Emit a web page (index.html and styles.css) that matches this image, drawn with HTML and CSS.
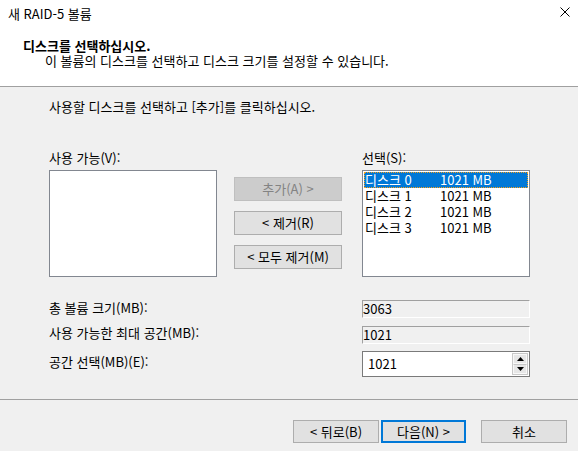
FILE: index.html
```html
<!DOCTYPE html>
<html lang="ko">
<head>
<meta charset="utf-8">
<title>새 RAID-5 볼륨</title>
<link rel="stylesheet" href="styles.css">
</head>
<body>
<div class="dialog">
  <div class="header">
    <div class="titlebar">
      <span class="title">새 RAID-5 볼륨</span>
      <svg class="close" width="10" height="10" viewBox="0 0 10 10"><path d="M0.5 0.5 L9.5 9.5 M9.5 0.5 L0.5 9.5" stroke="#000" stroke-width="1" fill="none"/></svg>
    </div>
    <div class="heading">디스크를 선택하십시오.</div>
    <div class="subheading">이 볼륨의 디스크를 선택하고 디스크 크기를 설정할 수 있습니다.</div>
  </div>

  <div class="content">
    <div class="instruction">사용할 디스크를 선택하고 [추가]를 클릭하십시오.</div>

    <div class="picker">
      <div class="col">
        <div class="label">사용 가능(V):</div>
        <div class="listbox"></div>
      </div>
      <div class="buttons">
        <div class="btn disabled">추가(A) &gt;</div>
        <div class="btn">&lt; 제거(R)</div>
        <div class="btn">&lt; 모두 제거(M)</div>
      </div>
      <div class="col">
        <div class="label">선택(S):</div>
        <div class="listbox">
          <div class="row selected"><span class="c1">디스크 0</span><span>1021 MB</span></div>
          <div class="row"><span class="c1">디스크 1</span><span>1021 MB</span></div>
          <div class="row"><span class="c1">디스크 2</span><span>1021 MB</span></div>
          <div class="row"><span class="c1">디스크 3</span><span>1021 MB</span></div>
        </div>
      </div>
    </div>

    <div class="fields">
      <div class="flabel">총 볼륨 크기(MB):</div>
      <div class="field readonly">3063</div>
      <div class="flabel l2">사용 가능한 최대 공간(MB):</div>
      <div class="field readonly f2">1021</div>
      <div class="flabel l3">공간 선택(MB)(E):</div>
      <div class="spin">
        <span class="spinval">1021</span>
        <div class="spinbtns">
          <div class="sb"><svg width="7" height="4" viewBox="0 0 7 4"><path d="M3.5 0 L7 4 L0 4 Z" fill="#000"/></svg></div>
          <div class="sb"><svg width="7" height="4" viewBox="0 0 7 4"><path d="M0 0 L7 0 L3.5 4 Z" fill="#000"/></svg></div>
        </div>
      </div>
    </div>
  </div>

  <div class="footer">
    <div class="btn fbtn">&lt; 뒤로(B)</div>
    <div class="btn fbtn default">다음(N) &gt;</div>
    <div class="btn fbtn cancel">취소</div>
  </div>
</div>
</body>
</html>
```

FILE: styles.css
```css
html, body {
  margin: 0;
  padding: 0;
}
body {
  width: 578px;
  height: 451px;
  overflow: hidden;
  background: #f0f0f0;
  font-family: "Noto Sans CJK KR", sans-serif;
  font-size: 13px;
  line-height: 16px;
  color: #000;
}
.dialog {
  width: 578px;
  height: 451px;
  display: flex;
  flex-direction: column;
}
.header {
  background: #fff;
  height: 86px;
  border-bottom: 1px solid #a0a0a0;
  flex: none;
}
.titlebar {
  display: flex;
  align-items: center;
  justify-content: space-between;
  height: 16px;
  padding: 6px 8px 0 8px;
}
.close {
  margin-top: -4px;
}
.heading {
  font-weight: bold;
  margin-top: 16px;
  padding-left: 23px;
}
.subheading {
  padding-left: 45px;
  margin-top: -1px;
}
.content {
  flex: 1;
  padding-left: 49px;
}
.instruction {
  margin-top: 12px;
}
.picker {
  display: flex;
  margin-top: 35px;
}
.col {
  width: 168px;
  display: flex;
  flex-direction: column;
}
.label {
  height: 16px;
  margin-bottom: 4px;
}
.listbox {
  box-sizing: border-box;
  height: 107px;
  background: #fff;
  border: 1px solid #828790;
  padding: 1px 1px 0 1px;
}
.buttons {
  width: 108px;
  margin: 27px 20px 0 17px;
  display: flex;
  flex-direction: column;
  gap: 10px;
}
.btn {
  box-sizing: border-box;
  height: 24px;
  background: #e1e1e1;
  border: 1px solid #adadad;
  display: flex;
  align-items: center;
  justify-content: center;
}
.btn.disabled {
  background: #cccccc;
  border-color: #bfbfbf;
  color: #838383;
}
.row {
  box-sizing: border-box;
  height: 16px;
  display: flex;
  align-items: center;
  padding-left: 0;
  border: 1px solid transparent;
}
.row.selected {
  background: #0078d7;
  color: #fff;
  border: 1px dotted #f7a01a;
}
.c1 {
  width: 75px;
}
.fields {
  display: grid;
  grid-template-columns: 313px 168px;
  grid-template-rows: 18px 18px 26px;
  row-gap: 8px;
  margin-top: 23px;
  align-items: center;
}
.flabel {
  align-self: start;
}
.flabel.l2 {
  margin-top: -1px;
}
.flabel.l3 {
  margin-top: 2px;
}
.field {
  box-sizing: border-box;
  height: 18px;
  border-top: 1px solid #a0a0a0;
  border-left: 1px solid #a0a0a0;
  border-right: 1px solid #fff;
  border-bottom: 1px solid #fff;
  line-height: 16px;
}
.spin {
  box-sizing: border-box;
  height: 26px;
  margin-top: -2px;
  background: #fff;
  border: 1px solid #7a7a7a;
  display: flex;
  align-items: center;
  justify-content: space-between;
  padding: 0 1px 0 5px;
}
.spinbtns {
  box-sizing: border-box;
  width: 16px;
  height: 22px;
  border: 1px solid #c8c8c8;
  display: flex;
  flex-direction: column;
}
.sb {
  flex: 1;
  background: #e6e6e6;
  border: 1px solid #f8f8f8;
  display: flex;
  align-items: center;
  justify-content: center;
}
.sb + .sb {
  border-top: 1px solid #c8c8c8;
}
.footer {
  flex: none;
  height: 52px;
  border-top: 1px solid #a0a0a0;
  display: flex;
  justify-content: flex-end;
  align-items: flex-start;
  padding: 20px 11px 0 0;
  box-sizing: border-box;
}
.fbtn {
  width: 86px;
  height: 23px;
}
.fbtn.default {
  width: 85px;
  margin-left: 2px;
  border: 2px solid #0078d7;
}
.fbtn.cancel {
  margin-left: 15px;
}
```
